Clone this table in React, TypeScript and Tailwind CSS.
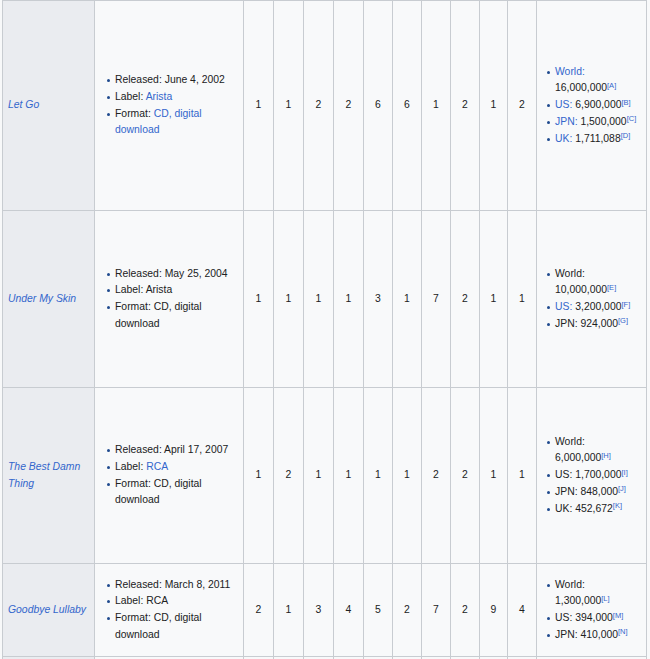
import React from 'react';

type Part = { text: string; link?: boolean; br?: boolean };
type Sale = { region: string; value: string; note: string; link?: boolean; wrap?: boolean };
type Album = {
  title: string;
  height: string;
  released: string;
  label: Part[];
  format: Part[];
  peaks: string[];
  sales: Sale[];
};

const ALBUMS: Album[] = [
  {
    title: 'Let Go',
    height: 'h-[210px]',
    released: 'June 4, 2002',
    label: [{ text: 'Arista', link: true }],
    format: [{ text: 'CD, digital', link: true }, { text: 'download', link: true, br: true }],
    peaks: ['1', '1', '2', '2', '6', '6', '1', '2', '1', '2'],
    sales: [
      { region: 'World', value: '16,000,000', note: 'A', link: true, wrap: true },
      { region: 'US', value: '6,900,000', note: 'B', link: true },
      { region: 'JPN', value: '1,500,000', note: 'C', link: true },
      { region: 'UK', value: '1,711,088', note: 'D', link: true },
    ],
  },
  {
    title: 'Under My Skin',
    height: 'h-[177px]',
    released: 'May 25, 2004',
    label: [{ text: 'Arista' }],
    format: [{ text: 'CD, digital' }, { text: 'download', br: true }],
    peaks: ['1', '1', '1', '1', '3', '1', '7', '2', '1', '1'],
    sales: [
      { region: 'World', value: '10,000,000', note: 'E', wrap: true },
      { region: 'US', value: '3,200,000', note: 'F', link: true },
      { region: 'JPN', value: '924,000', note: 'G' },
    ],
  },
  {
    title: 'The Best Damn Thing',
    height: 'h-[176px]',
    released: 'April 17, 2007',
    label: [{ text: 'RCA', link: true }],
    format: [{ text: 'CD, digital' }, { text: 'download', br: true }],
    peaks: ['1', '2', '1', '1', '1', '1', '2', '2', '1', '1'],
    sales: [
      { region: 'World', value: '6,000,000', note: 'H', wrap: true },
      { region: 'US', value: '1,700,000', note: 'I' },
      { region: 'JPN', value: '848,000', note: 'J' },
      { region: 'UK', value: '452,672', note: 'K' },
    ],
  },
  {
    title: 'Goodbye Lullaby',
    height: 'h-[93px]',
    released: 'March 8, 2011',
    label: [{ text: 'RCA' }],
    format: [{ text: 'CD, digital' }, { text: 'download', br: true }],
    peaks: ['2', '1', '3', '4', '5', '2', '7', '2', '9', '4'],
    sales: [
      { region: 'World', value: '1,300,000', note: 'L', wrap: true },
      { region: 'US', value: '394,000', note: 'M' },
      { region: 'JPN', value: '410,000', note: 'N' },
    ],
  },
];

const PEAK_WIDTHS = ['w-[30px]', 'w-[30px]', 'w-[30px]', 'w-[30px]', 'w-[29px]', 'w-[29px]', 'w-[29px]', 'w-[29px]', 'w-[28px]', 'w-[29px]'];

const CELL = 'border border-[#c8ccd1] align-middle';

function Bullet({ children }: { children: React.ReactNode }) {
  return (
    <li className="flex">
      <span className="mt-[7px] mr-[5px] h-[3px] w-[3px] shrink-0 rounded-full bg-[#1f4a8e]" />
      <span>{children}</span>
    </li>
  );
}

function Parts({ parts }: { parts: Part[] }) {
  return (
    <>
      {parts.map((p, i) => (
        <React.Fragment key={i}>
          {p.br && <br />}
          <span className={p.link ? 'text-[#3366cc]' : ''}>{p.text}</span>
        </React.Fragment>
      ))}
    </>
  );
}

export default function App() {
  return (
    <div
      className="min-h-screen bg-[#f8f9fa] pl-[2px] text-[10.4px] leading-[16.7px] text-[#202122]"
      style={{ fontFamily: '"Liberation Sans", Arial, sans-serif' }}
    >
      <table className="table-fixed border-collapse">
        <colgroup>
          <col className="w-[92px]" />
          <col className="w-[149px]" />
          {PEAK_WIDTHS.map((w, i) => (
            <col key={i} className={w} />
          ))}
          <col className="w-[110px]" />
        </colgroup>
        <tbody>
          {ALBUMS.map((a) => (
            <tr key={a.title} className={a.height}>
              <th className={`${CELL} bg-[#eaecf0] px-[5px] text-left font-normal italic text-[#3366cc]`}>
                {a.title}
              </th>
              <td className={`${CELL} bg-[#f8f9fa] px-[5px]`}>
                <ul className="pl-[7px]">
                  <Bullet>Released: {a.released}</Bullet>
                  <Bullet>
                    Label: <Parts parts={a.label} />
                  </Bullet>
                  <Bullet>
                    Format: <Parts parts={a.format} />
                  </Bullet>
                </ul>
              </td>
              {a.peaks.map((p, i) => (
                <td key={i} className={`${CELL} bg-[#f8f9fa] text-center`}>
                  {p}
                </td>
              ))}
              <td className={`${CELL} bg-[#f8f9fa] px-[5px]`}>
                <ul className="pl-[5px]">
                  {a.sales.map((s) => (
                    <Bullet key={s.region}>
                      <span className={s.link ? 'text-[#3366cc]' : ''}>{s.region}:</span>
                      {s.wrap ? <br /> : ' '}
                      {s.value}
                      <sup className="relative top-[-3.5px] align-baseline text-[7.5px] leading-none text-[#3366cc]">
                        [{s.note}]
                      </sup>
                    </Bullet>
                  ))}
                </ul>
              </td>
            </tr>
          ))}
          <tr className="h-[40px]">
            <th className={`${CELL} bg-[#eaecf0]`} />
            <td className={`${CELL} bg-[#f8f9fa]`} />
            {PEAK_WIDTHS.map((_, i) => (
              <td key={i} className={`${CELL} bg-[#f8f9fa]`} />
            ))}
            <td className={`${CELL} bg-[#f8f9fa]`} />
          </tr>
        </tbody>
      </table>
    </div>
  );
}
